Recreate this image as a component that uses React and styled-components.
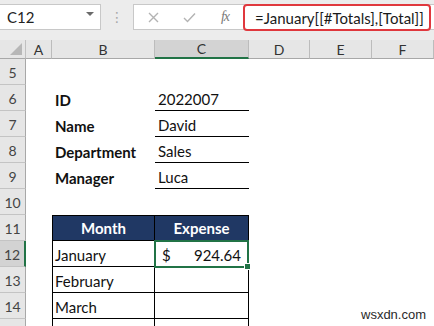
import React from 'react'
import styled, { createGlobalStyle } from 'styled-components'

const GlobalStyle = createGlobalStyle`
  html, body {
    margin: 0;
    padding: 0;
    background: #ffffff;
  }
  body {
    font-family: Lato, "Open Sans", sans-serif;
  }
`

const GREEN = '#217346'
const NAVY = '#203864'

const columns = ['A', 'B', 'C', 'D', 'E', 'F']

const rows = [
  { n: 5 },
  { n: 6, label: 'ID', value: '2022007' },
  { n: 7, label: 'Name', value: 'David' },
  { n: 8, label: 'Department', value: 'Sales' },
  { n: 9, label: 'Manager', value: 'Luca' },
  { n: 10 },
  { n: 11, head: ['Month', 'Expense'] },
  { n: 12, month: 'January', amount: '924.64', selected: true },
  { n: 13, month: 'February' },
  { n: 14, month: 'March' },
  { n: 15, month: '' },
]

function XIcon() {
  return (
    <svg width="11" height="11" viewBox="0 0 11 11">
      <path d="M1 1 L10 10 M10 1 L1 10" stroke="#b3b3b3" strokeWidth="1.4" fill="none" />
    </svg>
  )
}

function CheckIcon() {
  return (
    <svg width="13" height="11" viewBox="0 0 13 11">
      <path d="M1 6 L4.5 9.5 L12 1.5" stroke="#b3b3b3" strokeWidth="1.4" fill="none" />
    </svg>
  )
}

function App() {
  return (
    <Window>
      <GlobalStyle />
      <FormulaBar>
        <NameBox>
          <span>C12</span>
          <DropArrow />
        </NameBox>
        <Dots>⋮</Dots>
        <FuncBox>
          <IconSlot $w={36}><XIcon /></IconSlot>
          <IconSlot $w={36}><CheckIcon /></IconSlot>
          <Fx>fx</Fx>
          <FormulaInput>=January[[#Totals],[Total]]</FormulaInput>
        </FuncBox>
      </FormulaBar>

      <Sheet>
        <Corner>
          <CornerTriangle />
        </Corner>
        {columns.map(c => (
          <ColHead key={c} $active={c === 'C'}>{c}</ColHead>
        ))}

        {rows.map(r => (
          <React.Fragment key={r.n}>
            <RowHead $active={r.selected}>{r.n}</RowHead>
            <Cell />
            {r.label ? (
              <>
                <Cell $bold>{r.label}</Cell>
                <Cell $underline>{r.value}</Cell>
              </>
            ) : r.head ? (
              <>
                <HeadCell $left>{r.head[0]}</HeadCell>
                <HeadCell>{r.head[1]}</HeadCell>
              </>
            ) : r.month !== undefined ? (
              <>
                <TableCell $left>{r.month}</TableCell>
                {r.selected ? (
                  <SelectedCell>
                    <span>$</span>
                    <span>{r.amount}</span>
                    <FillHandle />
                  </SelectedCell>
                ) : (
                  <TableCell />
                )}
              </>
            ) : (
              <>
                <Cell />
                <Cell />
              </>
            )}
            <Cell />
            <Cell />
            <Cell />
          </React.Fragment>
        ))}
      </Sheet>

      <Watermark>wsxdn.com</Watermark>
    </Window>
  )
}

const Window = styled.div`
  position: relative;
  width: 434px;
  height: 326px;
  overflow: hidden;
  background: #ffffff;
`

const FormulaBar = styled.div`
  height: 40px;
  box-sizing: border-box;
  padding-top: 4px;
  display: flex;
  align-items: flex-start;
  background: #ececec;
`

const NameBox = styled.div`
  width: 101px;
  height: 26px;
  box-sizing: border-box;
  display: flex;
  align-items: center;
  justify-content: space-between;
  padding: 0 6px 0 7px;
  background: #ffffff;
  border: 1px solid #c8c8c8;
  border-left: none;
  font-size: 15px;
  color: #222;
`

const DropArrow = styled.div`
  width: 0;
  height: 0;
  border-left: 4px solid transparent;
  border-right: 4px solid transparent;
  border-top: 4px solid #6a6a6a;
  margin-top: -6px;
`

const Dots = styled.div`
  width: 32px;
  height: 26px;
  display: flex;
  align-items: center;
  justify-content: center;
  color: #a8a8a8;
  font-size: 14px;
  font-family: "DejaVu Sans", sans-serif;
`

const FuncBox = styled.div`
  flex: 1;
  height: 26px;
  box-sizing: border-box;
  display: flex;
  align-items: center;
  background: #ffffff;
  border: 1px solid #c8c8c8;
  border-right: none;
  padding-left: 1px;
`

const IconSlot = styled.div`
  width: ${p => p.$w}px;
  display: flex;
  justify-content: center;
  align-items: center;
`

const Fx = styled.div`
  width: 36px;
  text-align: center;
  font-family: "Liberation Serif", serif;
  font-style: italic;
  font-size: 14px;
  color: #7a7a7a;
  letter-spacing: -1px;
`

const FormulaInput = styled.div`
  flex: 1;
  align-self: stretch;
  margin: -1px 3px -2px 0;
  box-sizing: border-box;
  border: 2px solid #e0383e;
  border-radius: 4px;
  display: flex;
  align-items: center;
  padding-left: 10px;
  font-size: 15px;
  color: #1a1a1a;
  white-space: nowrap;
`

const Sheet = styled.div`
  display: grid;
  grid-template-columns: 26px 26px 103px 94px 61px 62px 62px;
  grid-template-rows: 19px;
  grid-auto-rows: 26px;
  font-size: 15px;
  color: #111;
`

const Corner = styled.div`
  position: relative;
  background: #e6e6e6;
  border-right: 1px solid #c0c0c0;
  border-bottom: 1px solid #a8a8a8;
`

const CornerTriangle = styled.div`
  position: absolute;
  right: 3px;
  bottom: 3px;
  width: 0;
  height: 0;
  border-left: 12px solid transparent;
  border-bottom: 12px solid #b7b7b7;
`

const ColHead = styled.div`
  display: flex;
  align-items: center;
  justify-content: center;
  background: ${p => (p.$active ? '#d3d3d3' : '#e6e6e6')};
  border-right: 1px solid #bcbcbc;
  border-bottom: ${p => (p.$active ? `2px solid ${GREEN}` : '1px solid #a8a8a8')};
  font-size: 14px;
  color: #333;
  box-sizing: border-box;
`

const RowHead = styled.div`
  display: flex;
  align-items: center;
  justify-content: center;
  background: ${p => (p.$active ? '#d3d3d3' : '#e6e6e6')};
  border-right: ${p => (p.$active ? `2px solid ${GREEN}` : '1px solid #a8a8a8')};
  border-bottom: 1px solid #c4c4c4;
  font-size: 14px;
  color: #444;
  padding-top: 2px;
  box-sizing: border-box;
`

const Cell = styled.div`
  display: flex;
  align-items: center;
  padding: 3px 0 0 3px;
  box-sizing: border-box;
  font-weight: ${p => (p.$bold ? 700 : 400)};
  border-bottom: ${p => (p.$underline ? '1px solid #000' : 'none')};
  white-space: nowrap;
`

const TableCell = styled(Cell)`
  border-right: 1px solid #000;
  border-bottom: 1px solid #000;
  border-left: ${p => (p.$left ? '1px solid #000' : 'none')};
  padding-left: ${p => (p.$left ? '2px' : '3px')};
`

const HeadCell = styled(TableCell)`
  justify-content: center;
  background: ${NAVY};
  color: #ffffff;
  font-weight: 700;
  border-top: 1px solid #000;
  padding: 0;
`

const SelectedCell = styled.div`
  position: relative;
  display: flex;
  align-items: center;
  justify-content: space-between;
  padding: 2px 6px 0 6px;
  margin: -1px 0 -1px -1px;
  box-sizing: border-box;
  border: 2px solid ${GREEN};
`

const FillHandle = styled.div`
  position: absolute;
  right: -4px;
  bottom: -4px;
  width: 5px;
  height: 5px;
  background: ${GREEN};
  border: 1px solid #ffffff;
`

const Watermark = styled.div`
  position: absolute;
  left: 361px;
  top: 307px;
  font-family: "Liberation Sans", Arial, sans-serif;
  font-size: 13px;
  color: #2a2a2a;
`

export default App
